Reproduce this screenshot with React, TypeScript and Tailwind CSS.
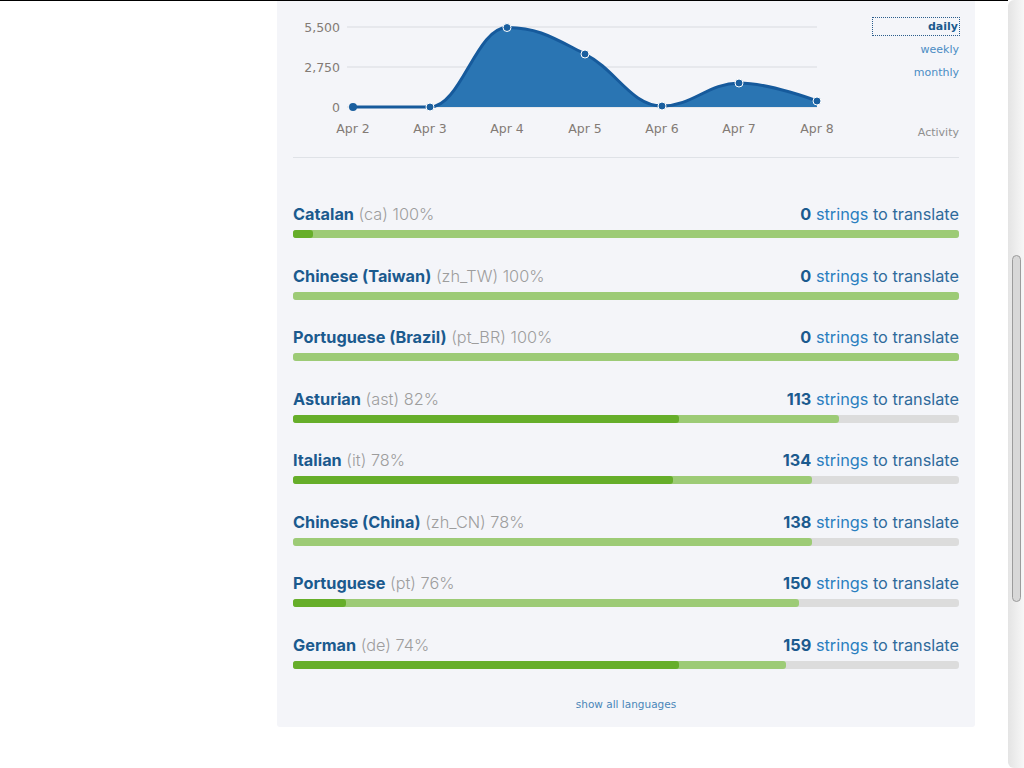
import React from 'react';

// Activity chart points (page coordinates, viewBox starts at the panel padding)
const chartPoints: [number, number][] = [
  [353, 107],
  [430, 107],
  [507, 27.5],
  [585, 54],
  [662, 106],
  [739, 83],
  [817, 101],
];
const days = ['Apr 2', 'Apr 3', 'Apr 4', 'Apr 5', 'Apr 6', 'Apr 7', 'Apr 8'];

class Lang {
  constructor(
    public name: string,
    public code: string,
    public pct: number,
    public left: number,
    public done: number,
    public review: number
  ) {}
}

const languages: Lang[] = [
  new Lang('Catalan', 'ca', 100, 0, 3, 100),
  new Lang('Chinese (Taiwan)', 'zh_TW', 100, 0, 0, 100),
  new Lang('Portuguese (Brazil)', 'pt_BR', 100, 0, 0, 100),
  new Lang('Asturian', 'ast', 82, 113, 58, 82),
  new Lang('Italian', 'it', 78, 134, 57, 77.9),
  new Lang('Chinese (China)', 'zh_CN', 78, 138, 0, 77.9),
  new Lang('Portuguese', 'pt', 76, 150, 8, 76),
  new Lang('German', 'de', 74, 159, 58, 74),
];

// smooth line, same control point rules as a highcharts spline
function splinePath(p: [number, number][]) {
  const sm = 1.5;
  const ctrl = p.map((pt, i) => {
    if (i === 0 || i === p.length - 1) return null;
    const [x, y] = pt;
    const [lx, ly] = p[i - 1];
    const [nx, ny] = p[i + 1];
    const lcx = (sm * x + lx) / (sm + 1);
    let lcy = (sm * y + ly) / (sm + 1);
    const rcx = (sm * x + nx) / (sm + 1);
    let rcy = (sm * y + ny) / (sm + 1);
    const corr = ((rcy - lcy) * (rcx - x)) / (rcx - lcx) + y - rcy;
    lcy += corr;
    rcy += corr;
    if (lcy > ly && lcy > y) {
      lcy = Math.max(ly, y);
      rcy = 2 * y - lcy;
    } else if (lcy < ly && lcy < y) {
      lcy = Math.min(ly, y);
      rcy = 2 * y - lcy;
    }
    if (rcy > ny && rcy > y) {
      rcy = Math.max(ny, y);
      lcy = 2 * y - rcy;
    } else if (rcy < ny && rcy < y) {
      rcy = Math.min(ny, y);
      lcy = 2 * y - rcy;
    }
    return { lcx, lcy, rcx, rcy };
  });
  let d = `M${p[0][0]},${p[0][1]}`;
  for (let i = 1; i < p.length; i++) {
    const prev = ctrl[i - 1];
    const cur = ctrl[i];
    const ax = prev ? prev.rcx : p[i - 1][0];
    const ay = prev ? prev.rcy : p[i - 1][1];
    const bx = cur ? cur.lcx : p[i][0];
    const by = cur ? cur.lcy : p[i][1];
    d += ` C${ax},${ay} ${bx},${by} ${p[i][0]},${p[i][1]}`;
  }
  return d;
}

function ActivityChart() {
  const line = splinePath(chartPoints);
  const area = `${line} L817,107 L353,107 Z`;
  return (
    <svg width="550" height="150" viewBox="293 1 550 150" style={{ fontFamily: '"DejaVu Sans", sans-serif' }}>
      <line x1="347" y1="27" x2="817" y2="27" stroke="#d9dbe0" strokeWidth="1" />
      <line x1="347" y1="67" x2="817" y2="67" stroke="#d9dbe0" strokeWidth="1" />
      <line x1="347" y1="107" x2="817" y2="107" stroke="#d9dbe0" strokeWidth="1" />
      <text x="340" y="31.5" textAnchor="end" fontSize="12.5" fill="#837b75">5,500</text>
      <text x="340" y="71.5" textAnchor="end" fontSize="12.5" fill="#837b75">2,750</text>
      <text x="340" y="111.5" textAnchor="end" fontSize="12.5" fill="#837b75">0</text>
      <path d={area} fill="#2a75b3" />
      <path d={line} fill="none" stroke="#165a9c" strokeWidth="3" strokeLinejoin="round" />
      {chartPoints.map(([x, y], i) => (
        <circle
          key={i}
          cx={x}
          cy={y}
          r="4"
          fill="#1a5f9f"
          stroke={i === 0 ? 'none' : '#ffffff'}
          strokeWidth="1"
        />
      ))}
      {days.map((d, i) => (
        <text key={d} x={chartPoints[i][0]} y="132.5" textAnchor="middle" fontSize="12.5" fill="#837b75">
          {d}
        </text>
      ))}
    </svg>
  );
}

function LangRow({ lang }: { lang: Lang }) {
  return (
    <div>
      <div className="flex h-5 items-center justify-between text-[16.3px] leading-5">
        <div>
          <span className="font-bold text-[#1b5a8e]">{lang.name}</span>
          <span className="font-light text-[#9d9d9d]"> ({lang.code}) {lang.pct}%</span>
        </div>
        <div>
          <span className="font-bold text-[#1b5a8e]">{lang.left}</span>
          <span className="text-[#2a7ebf]"> strings</span>
          <span className="text-[#2f6a9b]"> to translate</span>
        </div>
      </div>
      <div className="relative mt-[6px] h-2 rounded-[3px] bg-[#dcdcdc]">
        <div className="absolute left-0 top-0 h-2 rounded-[3px] bg-[#9dcb76]" style={{ width: `${lang.review}%` }} />
        {lang.done > 0 && (
          <div className="absolute left-0 top-0 h-2 rounded-[3px] bg-[#66ae2a]" style={{ width: `${lang.done}%` }} />
        )}
      </div>
    </div>
  );
}

export default function App() {
  return (
    <div className="flex h-[768px] w-[1024px] overflow-hidden bg-white" style={{ fontFamily: 'Inter, "Open Sans", sans-serif' }}>
      <div className="flex-1 border-t border-black">
        <div className="ml-[277px] w-[698px] rounded-b-[3px] bg-[#f4f5f9] px-4 pb-[15px]">
          {/* activity chart + period switch */}
          <div className="flex h-[157px] justify-between border-b border-[#dfe2e7]">
            <ActivityChart />
            <div
              className="w-[86px] pt-[14px] text-right text-[11px]"
              style={{ fontFamily: '"DejaVu Sans", sans-serif' }}
            >
              <div className="flex h-[23px] items-center">
                <a className="block h-[17px] w-full pr-px leading-[17px] font-bold text-[#1b5a8e] outline-1 outline-dotted outline-[#2a5d8c]">
                  daily
                </a>
              </div>
              <div className="h-[23px] leading-[23px] text-[#4a8cc4]">weekly</div>
              <div className="h-[23px] leading-[23px] text-[#4a8cc4]">monthly</div>
              <div className="mt-[37px] h-[23px] leading-[23px] text-[#8f8f8f]">Activity</div>
            </div>
          </div>

          {/* languages */}
          <div className="flex flex-col gap-[27.57px] pt-[46px]">
            {languages.map((l) => (
              <LangRow key={l.code} lang={l} />
            ))}
          </div>

          <div
            className="mt-[27px] text-center text-[10.5px] leading-4 text-[#4a86b8]"
            style={{ fontFamily: '"DejaVu Sans", sans-serif' }}
          >
            show all languages
          </div>
        </div>
      </div>

      {/* scrollbar */}
      <div className="w-4 rounded-l-[6px] bg-gradient-to-r from-[#e4e4e4] to-[#f7f7f7] pl-[4px]">
        <div className="mt-[255px] h-[347px] w-[9px] rounded-full border border-[#9c9c9c] bg-[#d8d8d8]" />
      </div>
    </div>
  );
}
